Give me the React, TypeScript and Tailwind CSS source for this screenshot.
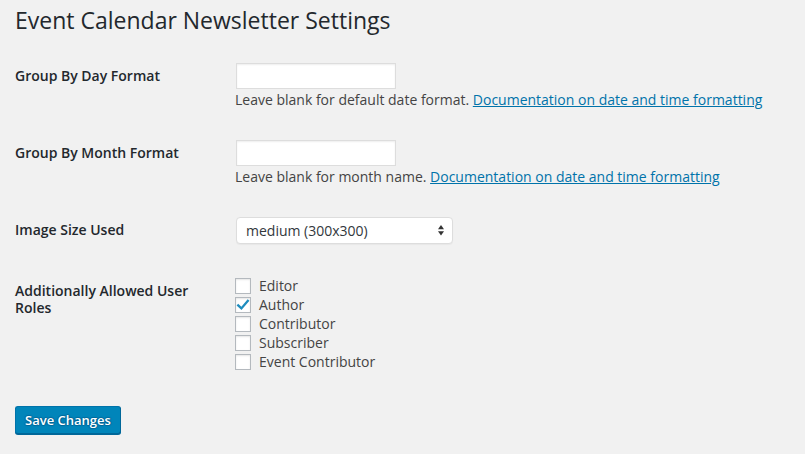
import React from "react";

const roles = [
  { name: "Editor", checked: false },
  { name: "Author", checked: true },
  { name: "Contributor", checked: false },
  { name: "Subscriber", checked: false },
  { name: "Event Contributor", checked: false },
];

function TextField() {
  return (
    <input
      type="text"
      className="ml-px block h-[26px] w-[160px] border border-[#ddd] bg-white px-1 text-[14px] text-[#32373c] shadow-[inset_0_1px_2px_rgba(0,0,0,0.07)] outline-none"
    />
  );
}

function Description({ text }: { text: string }) {
  return (
    <p className="mt-px text-[14px] leading-[20px] text-[#444]">
      {text}{" "}
      <a href="#" className="text-[#0073aa] underline">
        Documentation on date and time formatting
      </a>
    </p>
  );
}

function Checkbox({ checked }: { checked: boolean }) {
  return (
    <span className="relative flex h-4 w-4 shrink-0 items-center justify-center border border-[#b4b9be] bg-white shadow-[inset_0_1px_2px_rgba(0,0,0,0.1)]">
      {checked && (
        <svg viewBox="0 0 16 16" className="absolute -left-px -top-px h-4 w-4">
          <path
            d="M3.2 8.4 L6.4 11.4 L12.8 3.8"
            fill="none"
            stroke="#1e8cbe"
            strokeWidth="2.3"
            strokeLinecap="square"
          />
        </svg>
      )}
    </span>
  );
}

export default function App() {
  return (
    <div
      className="min-h-[454px] w-full bg-[#f1f1f1] px-[15px] text-[#444]"
      style={{ fontFamily: '"Open Sans", "Liberation Sans", sans-serif' }}
    >
      <h1 className="pt-[5px] text-[23px] font-normal leading-[30px] text-[#23282d]">
        Event Calendar Newsletter Settings
      </h1>

      <div className="mt-3">
        {/* Group by day */}
        <div className="flex pb-[14px] pt-4">
          <div className="w-[220px] shrink-0 pr-5 pt-1 text-[14px] font-semibold leading-[18px] text-[#23282d]">
            Group By Day Format
          </div>
          <div>
            <TextField />
            <Description text="Leave blank for default date format." />
          </div>
        </div>

        {/* Group by month */}
        <div className="flex pb-[14px] pt-4">
          <div className="w-[220px] shrink-0 pr-5 pt-1 text-[14px] font-semibold leading-[18px] text-[#23282d]">
            Group By Month Format
          </div>
          <div>
            <TextField />
            <Description text="Leave blank for month name." />
          </div>
        </div>

        {/* Image size */}
        <div className="flex pb-[17px] pt-4">
          <div className="w-[220px] shrink-0 pr-5 pt-1 text-[14px] font-semibold leading-[18px] text-[#23282d]">
            Image Size Used
          </div>
          <div className="relative ml-px w-[217px]">
            <select
              defaultValue="medium"
              className="block h-[27px] w-full appearance-none rounded-[4px] border border-[#ddd] bg-white pl-[9px] pr-6 text-[14px] leading-[25px] text-[#32373c] shadow-[0_1px_1px_rgba(0,0,0,0.04)] outline-none"
            >
              <option value="thumbnail">thumbnail (150x150)</option>
              <option value="medium">medium (300x300)</option>
              <option value="large">large (1024x1024)</option>
            </select>
            <svg
              viewBox="0 0 6 11"
              className="pointer-events-none absolute right-[9px] top-[8px] h-[11px] w-[6px]"
            >
              <path d="M3 0 L6 4.2 L0 4.2 Z" fill="#333" />
              <path d="M0 6.3 L6 6.3 L3 10.5 Z" fill="#333" />
            </svg>
          </div>
        </div>

        {/* Roles */}
        <div className="flex pb-[15px] pt-[15px]">
          <div className="w-[220px] shrink-0 pr-5 pt-[6px] text-[14px] font-semibold leading-[17px] text-[#23282d]">
            Additionally Allowed User Roles
          </div>
          <div className="flex flex-col">
            {roles.map((r) => (
              <label
                key={r.name}
                className="flex h-[19px] items-center gap-2 text-[14px] leading-[19px] text-[#444]"
              >
                <Checkbox checked={r.checked} />
                <span>{r.name}</span>
              </label>
            ))}
          </div>
        </div>
      </div>

      <div className="pt-5">
        <button className="h-[28px] rounded-[3px] border border-[#0073aa] border-b-[#006799] border-r-[#006799] bg-[#0085ba] px-[9px] pb-px text-[13px] font-semibold leading-[26px] text-white shadow-[0_1px_0_#006799] [text-shadow:0_-1px_1px_#006799,1px_0_1px_#006799,0_1px_1px_#006799,-1px_0_1px_#006799]">
          Save Changes
        </button>
      </div>
    </div>
  );
}
